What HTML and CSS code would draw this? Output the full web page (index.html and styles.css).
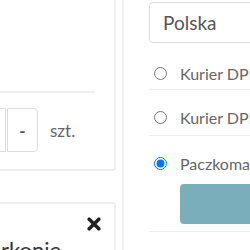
FILE: index.html
```html
<!DOCTYPE html>
<html lang="pl">
<head>
  <meta charset="UTF-8">
  <meta name="viewport" content="width=device-width, initial-scale=1.0">
  <title>Koszyk</title>
  <link rel="stylesheet" href="styles.css">
</head>
<body>
  <div class="page">
    <div class="left-col">
      <div class="card card-product">
        <div class="card-line"></div>
        <div class="qty-row">
          <div class="qty-group">
            <input class="qty-input" type="text" value="1">
            <button class="qty-btn">-</button>
          </div>
          <span class="qty-unit">szt.</span>
        </div>
      </div>

      <div class="card card-summary">
        <div class="card-head">
          <svg class="close-icon" width="14" height="14" viewBox="0 0 14 14">
            <path d="M2.2 2.2 L11.8 11.8 M11.8 2.2 L2.2 11.8" stroke="#222" stroke-width="3.6" stroke-linecap="round"/>
          </svg>
        </div>
        <div class="summary-title">rkonie</div>
      </div>
    </div>

    <div class="right-col">
      <div class="country-select">Polska</div>
      <ul class="ship-list">
        <li class="ship-item">
          <label><input type="radio" name="ship"> <span>Kurier DPD</span></label>
        </li>
        <li class="ship-item">
          <label><input type="radio" name="ship"> <span>Kurier DPD pobranie</span></label>
        </li>
        <li class="ship-item">
          <label><input type="radio" name="ship" checked> <span>Paczkomaty InPost</span></label>
          <button class="locker-btn"></button>
        </li>
      </ul>
    </div>
  </div>
</body>
</html>
```

FILE: styles.css
```css
* {
  margin: 0;
  padding: 0;
  box-sizing: border-box;
}

body {
  width: 250px;
  height: 250px;
  overflow: hidden;
  background: #fff;
  font-family: 'Lato', 'Open Sans', sans-serif;
  color: #666;
}

.page {
  display: flex;
  align-items: flex-start;
}

.left-col {
  flex: none;
  width: 200px;
  margin-left: -84px;
  margin-top: -60px;
}

.card {
  border: 2px solid #efefef;
  border-radius: 3px;
  background: #fff;
}

.card-product {
  padding: 149px 19px 17px 20px;
}

.card-line {
  height: 2px;
  background: #efefef;
}

.qty-row {
  display: flex;
  align-items: center;
  margin-top: 15px;
}

.qty-group {
  display: flex;
}

.qty-input {
  width: 68px;
  height: 44px;
  border: 1px solid #ddd;
  border-radius: 4px 0 0 4px;
  font: inherit;
  color: transparent;
  outline: none;
}

.qty-btn {
  width: 31px;
  height: 44px;
  margin-left: 1px;
  border: 1px solid #ddd;
  border-radius: 0 4px 4px 0;
  background: #fff;
  font-family: 'Lato', sans-serif;
  font-size: 17px;
  font-weight: 700;
  color: #555;
}

.qty-unit {
  margin-left: 12px;
  font-size: 17px;
  color: #666;
}

.card-summary {
  margin-top: 31px;
  padding: 13px 13px 20px 20px;
}

.card-head {
  display: flex;
  justify-content: flex-end;
}

.close-icon {
  display: block;
}

.summary-title {
  margin-top: 5px;
  margin-left: 63px;
  font-size: 22px;
  color: #333;
}

/* right column */
.right-col {
  flex: none;
  width: 160px;
  margin-left: 6px;
  min-height: 250px;
  border-left: 2px solid #efefef;
  padding-left: 25px;
}

.country-select {
  height: 41px;
  margin-top: 2px;
  width: 150px;
  border: 1px solid #ddd;
  border-radius: 4px;
  padding-left: 13px;
  font-size: 19px;
  line-height: 39px;
  color: #555;
}

.ship-list {
  list-style: none;
  width: 150px;
}

.ship-item {
  padding: 17px 0 8px 5px;
  border-bottom: 1px solid #eee;
  white-space: nowrap;
}

.ship-item:first-child {
  padding-top: 20px;
  padding-bottom: 6px;
}

.ship-item:last-child {
  padding-bottom: 7px;
}

.ship-item label {
  display: flex;
  align-items: center;
  height: 20px;
  font-size: 16px;
  color: #666;
}

.ship-item input[type="radio"] {
  width: 13px;
  height: 13px;
  margin: 0 13px 0 0;
}

.locker-btn {
  display: block;
  width: 120px;
  height: 40px;
  margin: 11px 0 0 26px;
  border: none;
  border-radius: 4px;
  background: #7aaeba;
}
```
